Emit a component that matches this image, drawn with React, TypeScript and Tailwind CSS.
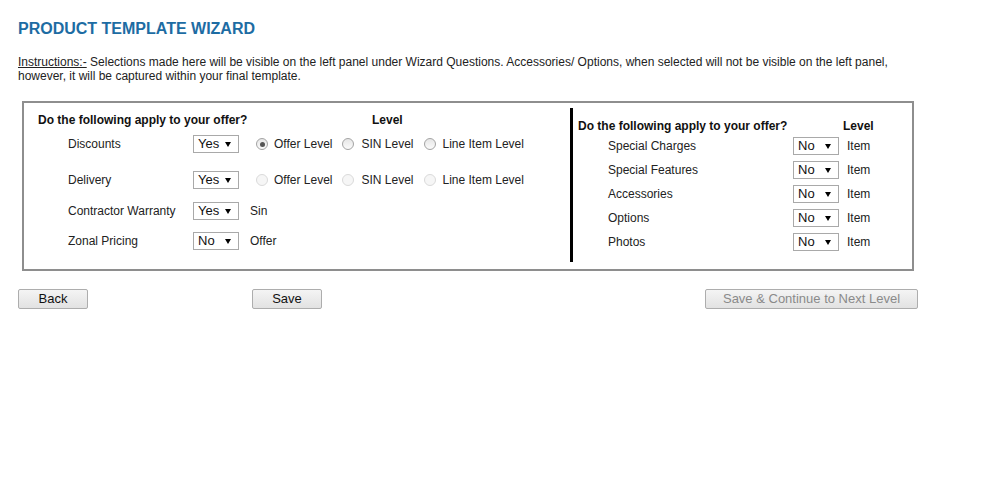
import React from "react";

function Sel({ v }: { v: string }) {
  return (
    <div className="relative w-[46px] h-[18px] shrink-0 border border-[#a9a9a9] bg-white text-[13px] leading-[16px] pl-[4px] text-[#111]">
      {v}
      <span className="absolute right-[7px] top-[6px] w-0 h-0 border-l-[3px] border-r-[3px] border-t-[5px] border-l-transparent border-r-transparent border-t-black" />
    </div>
  );
}

function Radio({ checked, disabled }: { checked?: boolean; disabled?: boolean }) {
  return (
    <span
      className={
        disabled
          ? "flex w-[12px] h-[12px] shrink-0 rounded-full border border-[#dadada] bg-[#f6f6f6]"
          : "flex w-[12px] h-[12px] shrink-0 rounded-full border border-[#a3a3a3] bg-gradient-to-b from-[#e6e6e6] to-[#fbfbfb] items-center justify-center"
      }
    >
      {checked && <span className="w-[5px] h-[5px] rounded-full bg-[#555]" />}
    </span>
  );
}

function Levels({ checked, disabled }: { checked: boolean; disabled?: boolean }) {
  return (
    <div className="flex items-center ml-[17px]">
      <Radio checked={checked} disabled={disabled} />
      <span className="ml-[6px]">Offer Level</span>
      <span className="ml-[10px] flex">
        <Radio disabled={disabled} />
      </span>
      <span className="ml-[7px]">SIN Level</span>
      <span className="ml-[10px] flex">
        <Radio disabled={disabled} />
      </span>
      <span className="ml-[7px]">Line Item Level</span>
    </div>
  );
}

function RightRow({ label }: { label: string }) {
  return (
    <div className="flex items-center h-[24px] pl-[30px]">
      <span className="w-[185px]">{label}</span>
      <Sel v="No" />
      <span className="ml-[8px]">Item</span>
    </div>
  );
}

function Btn({ children, disabled, w }: { children: React.ReactNode; disabled?: boolean; w: string }) {
  return (
    <button
      className={
        (disabled ? "text-[#8a8a8a] " : "text-[#111] ") +
        w +
        " h-[20px] border border-[#adadad] rounded-[2px] bg-gradient-to-b from-[#f4f4f4] to-[#e2e2e2] text-[13px] leading-[18px]"
      }
    >
      {children}
    </button>
  );
}

export default function App() {
  return (
    <div
      className="bg-white min-h-[500px] w-[993px] pl-[18px] pt-[19px] text-[12px] text-[#222]"
      style={{ fontFamily: '"Liberation Sans", Arial, sans-serif' }}
    >
      <h1 className="text-[16px] leading-[20px] font-bold text-[#1d6ca3]">PRODUCT TEMPLATE WIZARD</h1>
      <p className="mt-[16px] leading-[14px] w-[900px]">
        <span className="underline">Instructions:-</span> Selections made here will be visible on the left panel under
        Wizard Questions. Accessories/ Options, when selected will not be visible on the left panel, however, it will be
        captured within your final template.
      </p>

      <div className="mt-[18px] ml-[4px] w-[892px] h-[170px] border-2 border-[#8e8e8e] flex">
        <div className="w-[546px] pl-[14px] pt-[9px]">
          <div className="flex h-[16px] items-center font-bold text-[#111]">
            <span className="w-[334px]">Do the following apply to your offer?</span>
            <span>Level</span>
          </div>
          <div className="flex items-center h-[30px] mt-[1px] pl-[30px]">
            <span className="w-[125px]">Discounts</span>
            <Sel v="Yes" />
            <Levels checked />
          </div>
          <div className="flex items-center h-[30px] mt-[6px] pl-[30px]">
            <span className="w-[125px]">Delivery</span>
            <Sel v="Yes" />
            <Levels checked={false} disabled />
          </div>
          <div className="flex items-center h-[30px] mt-[1px] pl-[30px]">
            <span className="w-[125px]">Contractor Warranty</span>
            <Sel v="Yes" />
            <span className="ml-[11px]">Sin</span>
          </div>
          <div className="flex items-center h-[30px] pl-[30px]">
            <span className="w-[125px]">Zonal Pricing</span>
            <Sel v="No" />
            <span className="ml-[11px]">Offer</span>
          </div>
        </div>
        <div className="flex-1 mt-[5px] h-[154px] border-l-[3px] border-black pl-[5px] pt-[10px]">
          <div className="flex h-[16px] items-center font-bold text-[#111]">
            <span className="w-[265px]">Do the following apply to your offer?</span>
            <span>Level</span>
          </div>
          <RightRow label="Special Charges" />
          <RightRow label="Special Features" />
          <RightRow label="Accessories" />
          <RightRow label="Options" />
          <RightRow label="Photos" />
        </div>
      </div>

      <div className="flex mt-[18px]">
        <Btn w="w-[70px]">Back</Btn>
        <span className="ml-[164px]">
          <Btn w="w-[70px]">Save</Btn>
        </span>
        <span className="ml-[383px]">
          <Btn w="w-[213px]" disabled>
            Save &amp; Continue to Next Level
          </Btn>
        </span>
      </div>
    </div>
  );
}
